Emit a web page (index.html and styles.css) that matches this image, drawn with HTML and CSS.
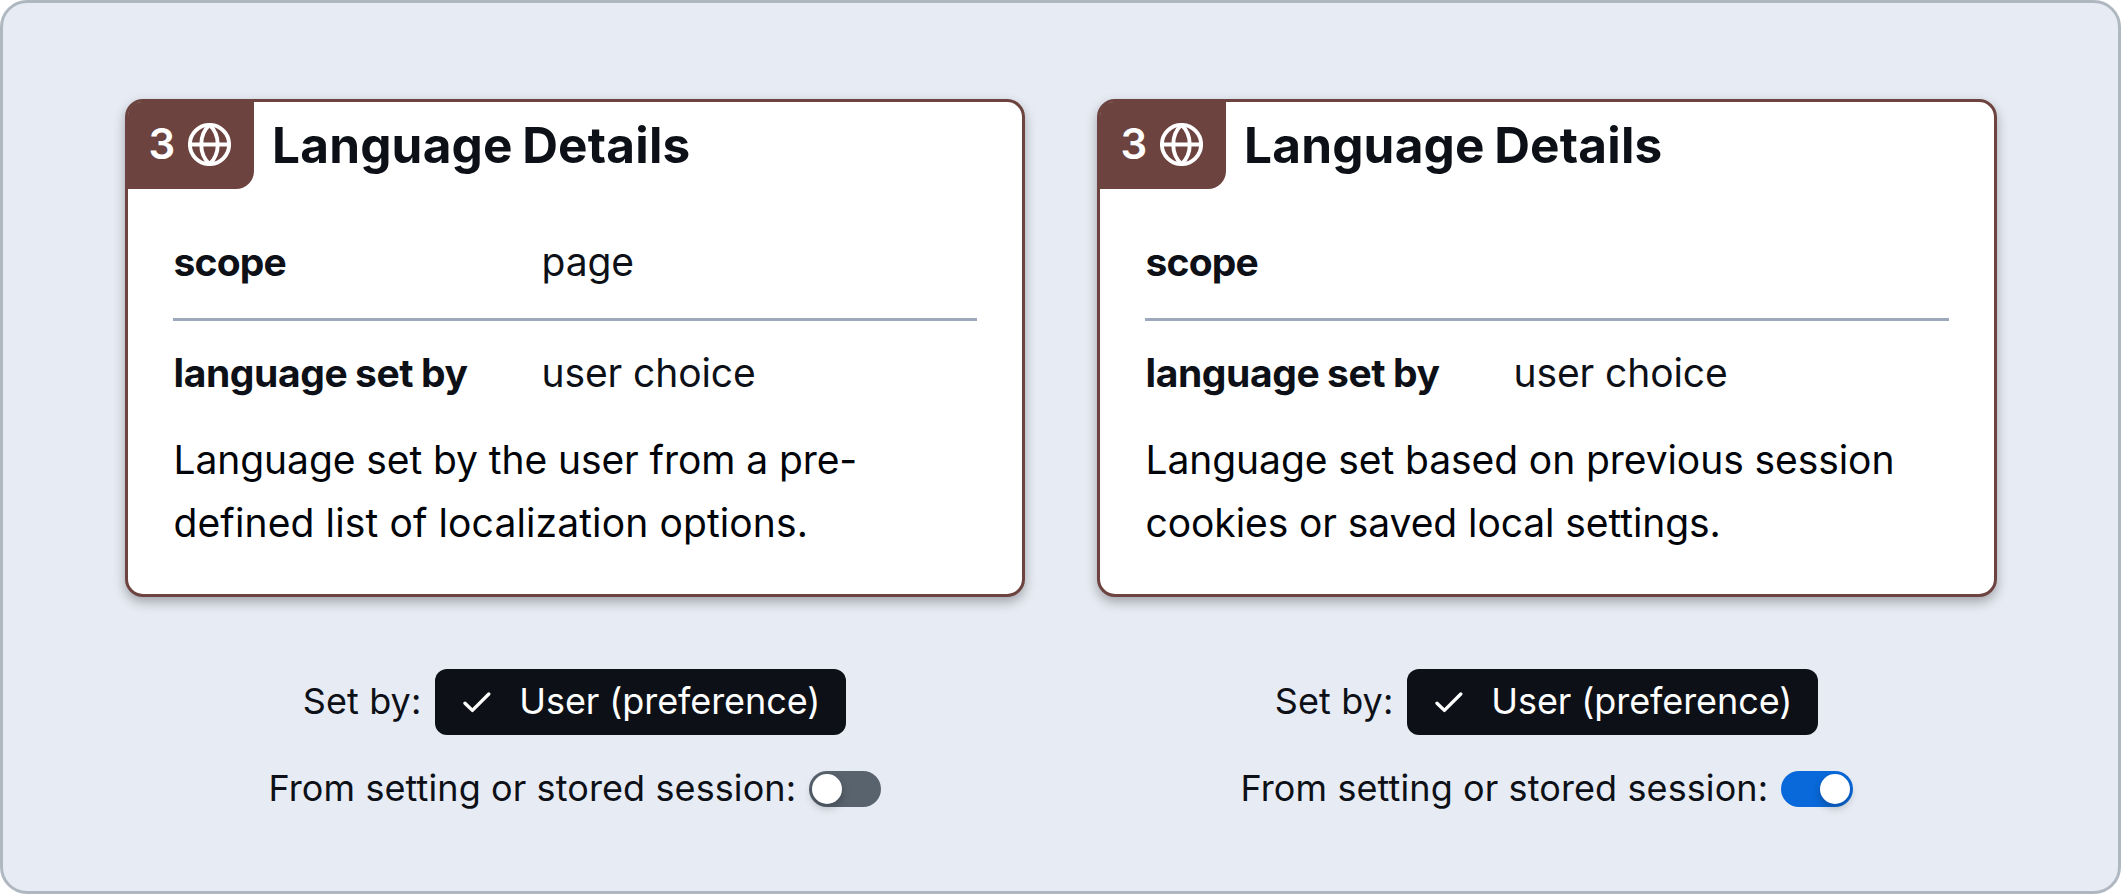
FILE: index.html
```html
<!DOCTYPE html>
<html lang="en">
<head>
<meta charset="utf-8">
<title>Language Details</title>
<link rel="stylesheet" href="styles.css">
</head>
<body>
<main class="panel">
  <section class="example">
    <article class="card">
      <header class="card-header">
        <div class="badge">
          <span class="badge-number">3</span>
          <svg class="globe" viewBox="0 0 43 43"><circle cx="21.5" cy="21.5" r="19.6"/><path d="M1.9 21.5H41.1M21.5 1.9C10.5 12 10.5 31 21.5 41.1M21.5 1.9C32.5 12 32.5 31 21.5 41.1"/></svg>
        </div>
        <h2 class="title">Language Details</h2>
      </header>
      <div class="card-body">
        <dl class="details">
          <div class="row row-first"><dt class="term">scope</dt><dd class="value">page</dd></div>
          <div class="row"><dt class="term">language set by</dt><dd class="value">user choice</dd></div>
        </dl>
        <p class="description">Language set by the user from a pre-<br><span class="loose">defined list of localization options.</span></p>
      </div>
    </article>
    <div class="controls">
      <div class="control">
        <span class="label">Set by:</span>
        <button class="select"><svg class="check" viewBox="0 0 28 21"><path d="M2 11.2L9.4 18.4L25.8 2"/></svg><span class="select-text">User (preference)</span></button>
      </div>
      <div class="control">
        <span class="label label-long">From setting or stored session:</span>
        <span class="toggle"><span class="knob"></span></span>
      </div>
    </div>
  </section>
  <section class="example">
    <article class="card">
      <header class="card-header">
        <div class="badge">
          <span class="badge-number">3</span>
          <svg class="globe" viewBox="0 0 43 43"><circle cx="21.5" cy="21.5" r="19.6"/><path d="M1.9 21.5H41.1M21.5 1.9C10.5 12 10.5 31 21.5 41.1M21.5 1.9C32.5 12 32.5 31 21.5 41.1"/></svg>
        </div>
        <h2 class="title">Language Details</h2>
      </header>
      <div class="card-body">
        <dl class="details">
          <div class="row row-first"><dt class="term">scope</dt><dd class="value"></dd></div>
          <div class="row"><dt class="term">language set by</dt><dd class="value">user choice</dd></div>
        </dl>
        <p class="description">Language set based on previous session<br>cookies or saved local settings.</p>
      </div>
    </article>
    <div class="controls">
      <div class="control">
        <span class="label">Set by:</span>
        <button class="select"><svg class="check" viewBox="0 0 28 21"><path d="M2 11.2L9.4 18.4L25.8 2"/></svg><span class="select-text">User (preference)</span></button>
      </div>
      <div class="control">
        <span class="label label-long">From setting or stored session:</span>
        <span class="toggle toggle-on"><span class="knob"></span></span>
      </div>
    </div>
  </section>
</main>
</body>
</html>
```

FILE: styles.css
```css
* { box-sizing: border-box; }

body {
  margin: 0;
  background: #fff;
  color: #0d1117;
  font-family: Inter, "Liberation Sans", sans-serif;
}

.panel {
  display: flex;
  justify-content: center;
  gap: 72px;
  height: 894px;
  padding-top: 96px;
  border: 3px solid #afb8c1;
  border-radius: 27px;
  background: #e7ebf3;
}

.example { width: 900px; }

.card {
  height: 498px;
  border: 3px solid #6c433f;
  border-radius: 18px;
  background: #fff;
  box-shadow: 0 5px 12px rgba(0, 0, 0, .3);
}

.card-header {
  display: flex;
  height: 87px;
}

.badge {
  display: flex;
  align-items: center;
  width: 126px;
  padding: 0 0 3px 21px;
  border-radius: 14px 0 18px 0;
  background: #6c433f;
  color: #fff;
}

.badge-number {
  width: 39px;
  font-size: 42px;
  font-weight: 600;
  line-height: 42px;
}

.globe {
  width: 43px;
  height: 43px;
  fill: none;
  stroke: #fff;
  stroke-width: 3.9;
}

.title {
  margin: 0 0 0 18.5px;
  font-size: 49.5px;
  font-weight: 700;
  letter-spacing: .2px;
  word-spacing: -2.5px;
  line-height: 87px;
}

.card-body { padding: 17px 45px 0; }

.details { margin: 0; }

.row {
  display: grid;
  grid-template-columns: 369px 1fr;
  align-items: center;
  height: 104px;
  font-size: 39px;
  line-height: 60px;
}

.row-first {
  height: 115px;
  border-bottom: 3px solid #9ca8bb;
}

.term {
  padding-left: 1px;
  font-weight: 700;
  letter-spacing: -.4px;
  word-spacing: -1px;
}

.row-first .term { letter-spacing: -.8px; }

.value {
  margin: 0;
  letter-spacing: -.1px;
}

.description {
  margin: 3px 0 0;
  padding-left: 1px;
  color: #010409;
  font-size: 39px;
  letter-spacing: -.08px;
  line-height: 63px;
  white-space: nowrap;
}

.loose { letter-spacing: .12px; }

.controls {
  display: flex;
  flex-direction: column;
  gap: 36px;
  margin-top: 72px;
}

.control {
  display: flex;
  align-items: center;
  justify-content: center;
}

.label {
  width: 132.5px;
  height: 36px;
  padding-bottom: 1px;
  font-size: 36px;
  letter-spacing: .1px;
  line-height: 35px;
  white-space: nowrap;
}

.label-long { width: 540px; }

.select {
  display: flex;
  align-items: center;
  width: 411px;
  height: 66px;
  padding: 0 0 2px 28px;
  border: 0;
  border-radius: 12px;
  background: #0d1117;
  color: #fff;
  font: 400 36px/46px Inter, sans-serif;
}

.check {
  width: 28px;
  height: 21px;
  margin-top: 3px;
  fill: none;
  stroke: #fff;
  stroke-width: 3.3;
  stroke-linecap: round;
  stroke-linejoin: round;
}

.select-text { margin-left: 28px; letter-spacing: -.08px; }

.toggle {
  display: flex;
  width: 72px;
  height: 36px;
  padding: 3px;
  border-radius: 18px;
  background: #59636e;
}

.toggle-on {
  justify-content: flex-end;
  background: #0969da;
}

.knob {
  width: 30px;
  height: 30px;
  border-radius: 50%;
  background: #fff;
  box-shadow: 0 4px 9px rgba(0, 0, 0, .25);
}
```
